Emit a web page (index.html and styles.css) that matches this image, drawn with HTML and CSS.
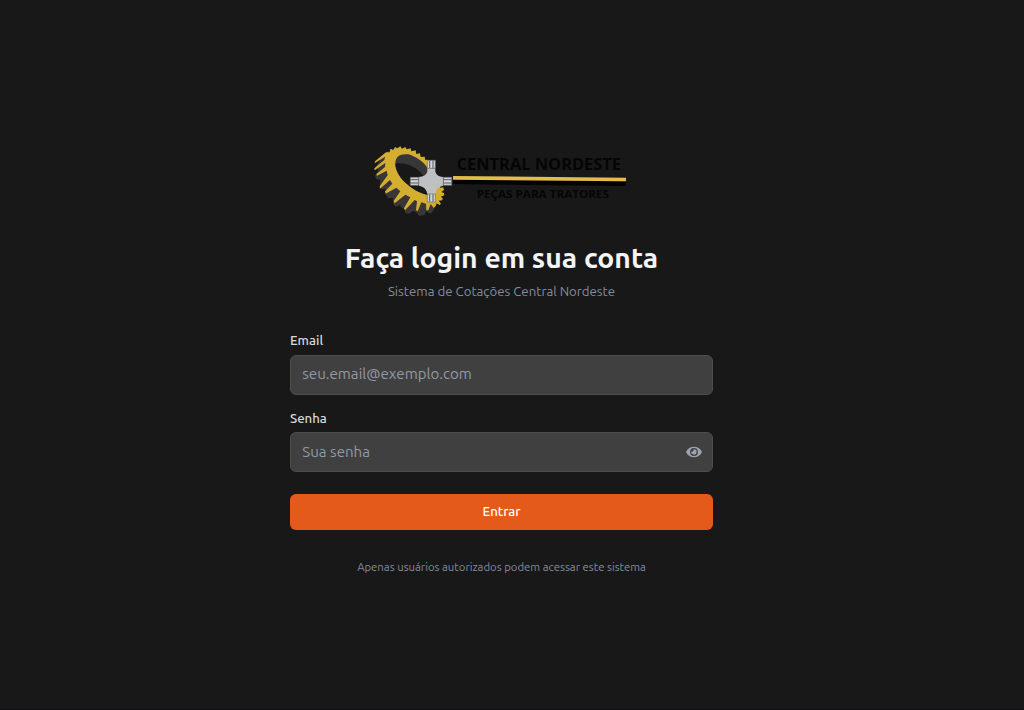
FILE: index.html
```html
<!DOCTYPE html>
<html lang="pt-BR">
<head>
<meta charset="utf-8">
<title>Central Nordeste - Login</title>
<link rel="stylesheet" href="styles.css">
</head>
<body>
<main class="login">
  <svg class="logo" viewBox="0 0 792 252" role="img" aria-label="Central Nordeste">
    <path fill="#393637" d="M70 38L52 55 34 84 40 98 30 112 33 123 46 126 44 146 50 153 64 154 62 168 69 180 84 181 84 197 91 206 105 202 111 211 118 213 121 225 133 227 142 219 153 222 163 234 179 231 183 220 197 227 208 214 210 190 155 180 95 125 80 60Z"/>
    <path fill="#d4ae30" d="M63 43L30 70 29 76 60 56 58 66 28 91 29 97 61 75 60 87 34 109 36 113 65 98 68 112 44 145 45 152 75 126 82 137 60 160 62 167 94 149 106 160 86 189 89 196 121 170 136 178 117 211 120 217 149 186 156 190 153 216 158 220 169 193 183 197 184 217 190 217 197 198 206 210 213 203 214 196 224 201 228 197 221 188 232 187 233 180 227 176 238 172 237 165 229 162 237 156 235 148 226 149 190 65 181 66 179 56 167 57 165 46 154 48 152 37 139 40 137 31 125 34 121 27 111 32 106 25 97 31 90 27 85 36 76 32 74 43Z"/>
    <path fill="#393637" d="M91 77C91 55 106 46 130 49C155 56 180 75 190 94L203 172C179 173 151 160 126 138C105 120 91 99 91 77Z"/>
    <path fill="#181818" d="M91 77C114 72 143 81 162 99C179 114 196 145 204 171C179 173 151 160 126 138C105 120 92 96 91 77Z"/>
    <path fill="#bfc0c2" d="M187 91H211V101Q215 115 234 117V143Q214 146 211 168H187Q183 146 162 143V117Q182 115 187 101Z"/>
    <g fill="#d4d5d7" stroke="#696a6d" stroke-width="2">
      <path d="M187 67h24v24h-24zM187 168h24v24h-24zM136 118h25v24h-25zM235 118h25v24h-25z"/>
      <path fill="none" stroke="#55575a" stroke-width="3" d="M194 68v22M204 68v22M194 169v22M204 169v22M137 125h23M137 135h23M236 125h23M236 135h23"/>
    </g>
    <path fill="#030303" d="M264 124L783 131V144L264 138Z"/>
    <path fill="#e2bd4b" d="M264 114L783 119V130L264 125Z"/>
    <text class="brand" x="275" y="96" textLength="493" lengthAdjust="spacingAndGlyphs">CENTRAL NORDESTE</text>
    <text class="tagline" x="335" y="180" textLength="397" lengthAdjust="spacingAndGlyphs">PEÇAS PARA TRATORES</text>
  </svg>
  <h1 class="title">Faça login em sua conta</h1>
  <p class="subtitle">Sistema de Cotações Central Nordeste</p>
  <form class="form">
    <label class="label" for="email">Email</label>
    <div class="field field-email"><input class="input" id="email" type="email" placeholder="seu.email@exemplo.com"></div>
    <label class="label label-password" for="password">Senha</label>
    <div class="field">
      <input class="input" id="password" type="password" placeholder="Sua senha">
      <svg class="eye" viewBox="0 0 576 512" aria-hidden="true"><path fill="currentColor" d="M572.5 241.400C518.300 135.600 410.900 64 288 64S57.700 135.600 3.500 241.400a32.400 32.400 0 0 0 0 29.200C57.700 376.400 165.100 448 288 448s230.300-71.600 284.500-177.400a32.400 32.400 0 0 0 0-29.200zM288 400a144 144 0 1 1 144-144 143.900 143.900 0 0 1-144 144zm0-240a95.300 95.300 0 0 0-25.300 3.800 47.900 47.900 0 0 1-66.900 66.900A95.800 95.800 0 1 0 288 160z"/></svg>
    </div>
    <button class="submit" type="button">Entrar</button>
  </form>
  <p class="note">Apenas usuários autorizados podem acessar este sistema</p>
</main>
</body>
</html>
```
FILE: styles.css
```css
* { box-sizing: border-box; }
html { background: #160c14; }
body {
  margin: 0;
  height: 709px;
  overflow: hidden;
  background: #181818;
  font-family: Ubuntu, "Noto Sans", sans-serif;
}
.login {
  display: flex;
  flex-direction: column;
  align-items: center;
  width: 423px;
  height: 709px;
  margin-left: 290px;
  padding-top: 138px;
  background: #181818;
}
.logo {
  display: block;
  width: 264px;
  height: 84px;
  align-self: flex-start;
  margin-left: 75px;
  overflow: visible;
}
.brand, .tagline { font-family: "Open Sans", "Noto Sans", sans-serif; font-weight: 700; fill: #050505; }
.brand { font-size: 49px; }
.tagline { font-size: 34px; }
.title {
  margin: 18px 0 0;
  height: 36px;
  line-height: 36px;
  font-size: 28.35px;
  font-weight: 600;
  color: #f3f4f6;
  white-space: nowrap;
}
.subtitle {
  margin: 7px 0 0;
  height: 18px;
  line-height: 18px;
  font-size: 13.23px;
  font-weight: 400;
  color: #858c99;
  white-space: nowrap;
}
.form { display: flex; flex-direction: column; width: 100%; margin-top: 31px; }
.label { height: 18px; line-height: 18px; font-size: 13.23px; font-weight: 500; color: #d5d8dc; }
.label-password { margin-top: 15px; }
.field {
  display: flex;
  align-items: center;
  height: 40px;
  margin-top: 4.5px;
  padding: 0 10px 0 11.300px;
  border: 1px solid #4d4d4d;
  border-radius: 6px;
  background: #404040;
}
.input {
  flex: 1;
  min-width: 0;
  height: 36px;
  padding: 0 0 1px;
  border: 0;
  outline: 0;
  background: transparent;
  font: 400 15.120px Ubuntu, "Noto Sans", sans-serif;
  color: #f3f4f6;
}
.field-email .input { padding-bottom: 3px; }
.input::placeholder { color: #9299a6; opacity: 1; }
.eye { width: 16px; height: 14px; color: #9ca3af; }
.submit {
  height: 36px;
  margin-top: 22px;
  padding: 0 0 1px;
  border: 0;
  border-radius: 6px;
  background: #e45a1a;
  color: #fff;
  font: 500 13.23px Ubuntu, "Noto Sans", sans-serif;
}
.note {
  margin: 29px 0 0;
  height: 16px;
  line-height: 16px;
  font-size: 11.340px;
  font-weight: 400;
  color: #858c99;
  white-space: nowrap;
}
```
